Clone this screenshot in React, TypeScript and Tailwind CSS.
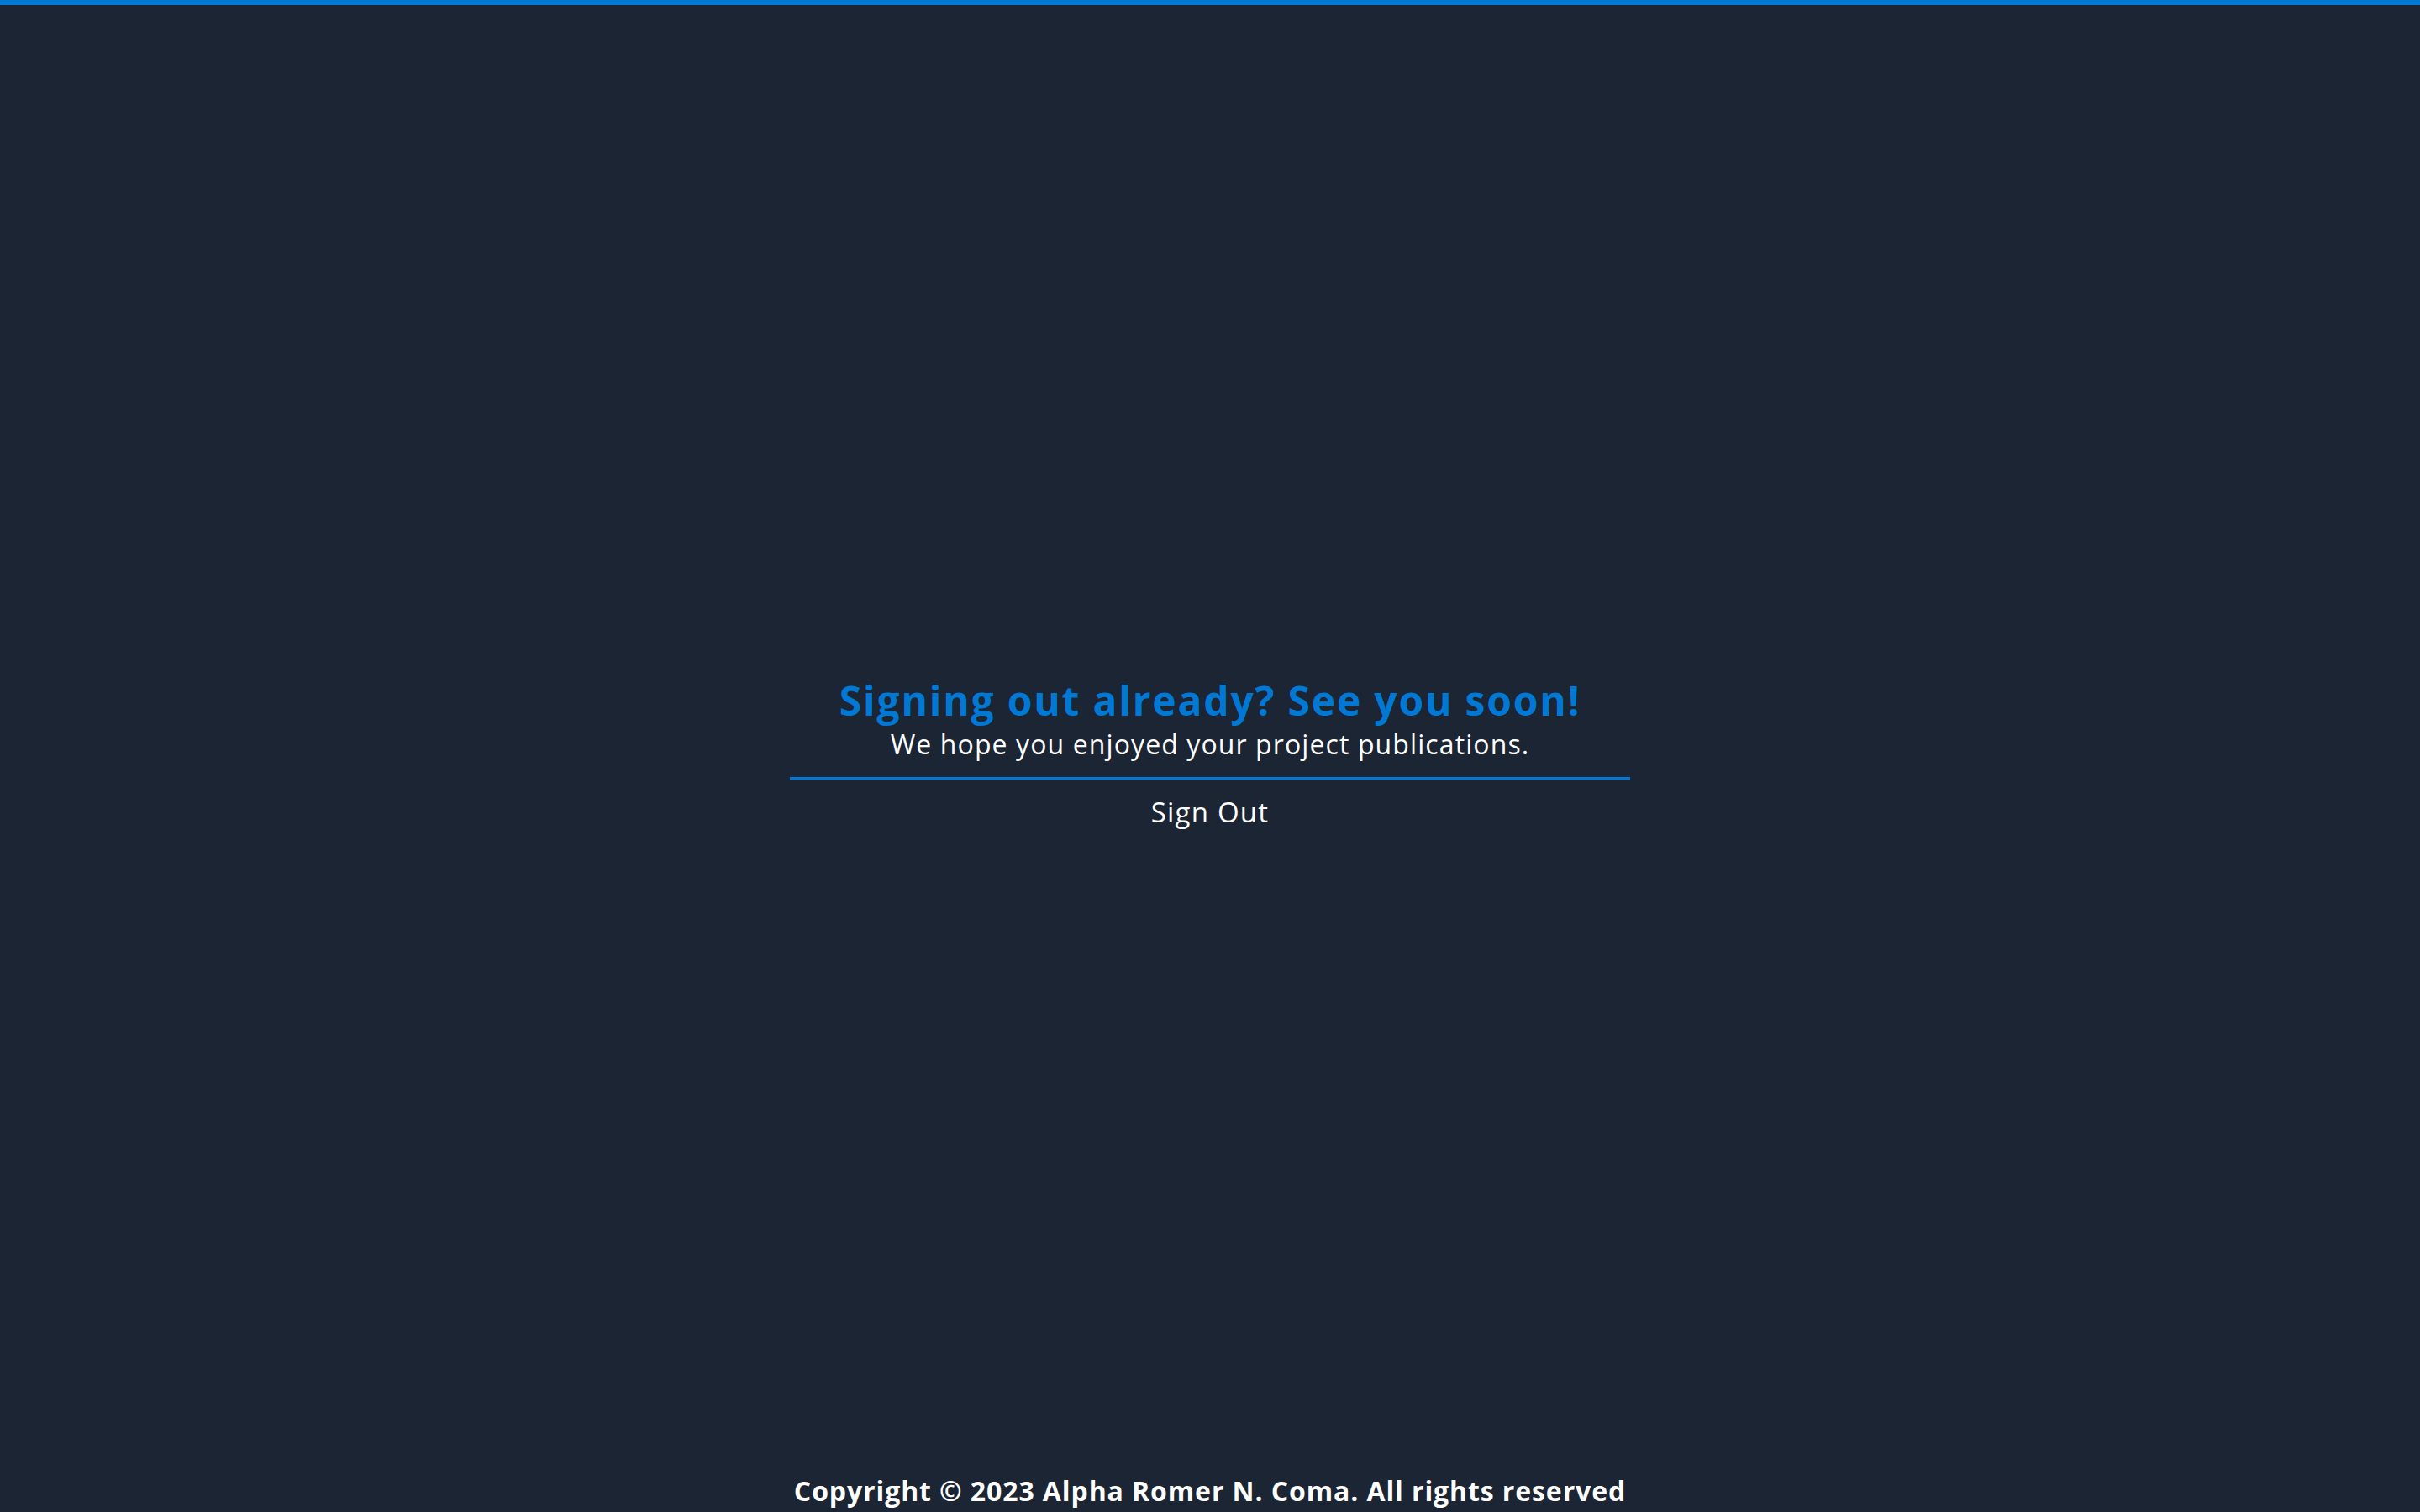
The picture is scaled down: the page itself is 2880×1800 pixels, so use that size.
import React from "react";

export default function App() {
  return (
    <div
      className="flex h-screen w-full flex-col bg-[#1b2533] text-white"
      style={{ fontFamily: '"Open Sans", "Noto Sans", sans-serif' }}
    >
      <div className="h-[6px] w-full shrink-0 bg-[#0078d4]" />
      <main className="flex flex-1 flex-col items-center justify-center pt-[39px]">
        <h1 className="mb-[4px] text-[48px] font-bold leading-[56px] tracking-[1.8px] text-[#0078d4]">
          Signing out already? See you soon!
        </h1>
        <p className="text-[32px] leading-[40px] tracking-[1.1px] text-white">
          We hope you enjoyed your project publications.
        </p>
        <div className="mt-[19px] h-[3px] w-[1000px] bg-[#0078d4]" />
        <button className="mt-[17px] text-[33px] leading-[44px] tracking-[1.2px] text-white">
          Sign Out
        </button>
      </main>
      <footer className="flex h-[50px] shrink-0 items-start justify-center pt-[5px]">
        <p className="text-[32px] font-bold leading-[40px] tracking-[0.9px] text-white">
          Copyright © 2023 Alpha Romer N. Coma. All rights reserved
        </p>
      </footer>
    </div>
  );
}
